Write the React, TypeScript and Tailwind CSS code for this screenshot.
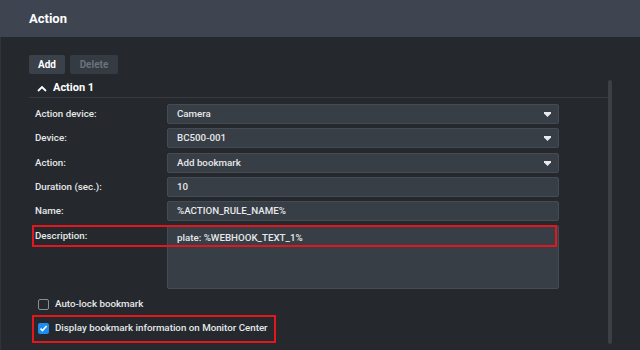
type Field = {
  label: string;
  value: string;
  select?: boolean;
  gap: string;
};

const fields: Field[] = [
  { label: "Action device:", value: "Camera", select: true, gap: "mt-0" },
  { label: "Device:", value: "BC500-001", select: true, gap: "mt-[4px]" },
  { label: "Action:", value: "Add bookmark", select: true, gap: "mt-[5px]" },
  { label: "Duration (sec.):", value: "10", gap: "mt-[4px]" },
  { label: "Name:", value: "%ACTION_RULE_NAME%", gap: "mt-[4px]" },
];

function Caret() {
  return (
    <svg width="7" height="5" viewBox="0 0 7 5" className="shrink-0">
      <path d="M0 0h7v1.4L3.5 5 0 1.4z" fill="#e8eaed" />
    </svg>
  );
}

function Checkbox({ checked }: { checked?: boolean }) {
  if (checked) {
    return (
      <span className="grid h-[11px] w-[11px] shrink-0 place-items-center rounded-[2px] bg-[#1b8ef2]">
        <svg width="9" height="9" viewBox="0 0 9 9">
          <path d="M1.5 4.6l2 2L7.6 2" fill="none" stroke="#ffffff" strokeWidth="1.6" />
        </svg>
      </span>
    );
  }
  return <span className="h-[11px] w-[11px] shrink-0 rounded-[2px] border border-[#8b9096]" />;
}

export default function App() {
  return (
    <div className="flex h-[350px] w-[640px] flex-col overflow-hidden bg-[#25282d] font-['Roboto',sans-serif] text-[9.75px] font-medium text-[#e6e8ea]">
      <header className="flex h-[37px] shrink-0 items-center bg-[#3e4550] pl-[29px]">
        <h1 className="text-[13px] font-bold text-white">Action</h1>
      </header>

      <div className="flex flex-1 border-l border-[#2f343b]">
        <div className="flex flex-1 flex-col pl-[28px] pt-[18px]">
          <div className="flex gap-[5px]">
            <button className="h-[19px] w-[36px] rounded-[2px] bg-[#3a414a] text-[10px] font-bold text-white">
              Add
            </button>
            <button className="h-[19px] w-[48px] rounded-[2px] bg-[#353b43] text-[10px] font-bold text-[#6c727a]">
              Delete
            </button>
          </div>

          <div className="flex">
            <div className="flex w-[581px] flex-col">
              <div className="mt-[5px] flex h-[19px] items-center gap-[6px] border-b border-[#363b42] pl-[8px]">
                <svg width="10" height="7" viewBox="0 0 10 7">
                  <path d="M1 6l4-4 4 4" fill="none" stroke="#ffffff" strokeWidth="1.8" />
                </svg>
                <span className="text-[11px] font-bold text-white">Action 1</span>
              </div>

              <div className="mt-[6px] flex flex-col pl-[6px]">
                {fields.map((f) => (
                  <div key={f.label} className={`flex items-center ${f.gap}`}>
                    <span className="w-[132px] shrink-0">{f.label}</span>
                    <div className="flex h-[20px] w-[392px] items-center justify-between rounded-[2px] border border-[#454b53] bg-[#383e46] pl-[9px] pr-[7px]">
                      <span>{f.value}</span>
                      {f.select && <Caret />}
                    </div>
                  </div>
                ))}

                <div className="relative mt-[4px] flex items-start">
                  <span className="flex h-[22px] w-[132px] shrink-0 items-center">Description:</span>
                  <div className="h-[64px] w-[392px] rounded-[2px] border border-[#454b53] bg-[#383e46] pl-[9px] pt-[5px]">
                    plate: %WEBHOOK_TEXT_1%
                  </div>
                  <div className="absolute left-[-3px] top-0 h-[22px] w-[525px] border-2 border-[#e3161e]" />
                </div>
              </div>

              <div className="mt-[5px] flex h-[20px] items-center gap-[6px] pl-[9px]">
                <Checkbox />
                <span>Auto-lock bookmark</span>
              </div>

              <div className="relative mt-[4px] flex h-[20px] items-center gap-[6px] pl-[9px]">
                <Checkbox checked />
                <span>Display bookmark information on Monitor Center</span>
                <div className="absolute left-[3px] top-[-3px] h-[28px] w-[244px] border-2 border-[#e3161e]" />
              </div>
            </div>

            <div className="ml-[-2px] mt-[6px] h-[264px] w-[4px] rounded-[2px] bg-[#3b4047]" />
          </div>
        </div>
      </div>
    </div>
  );
}
